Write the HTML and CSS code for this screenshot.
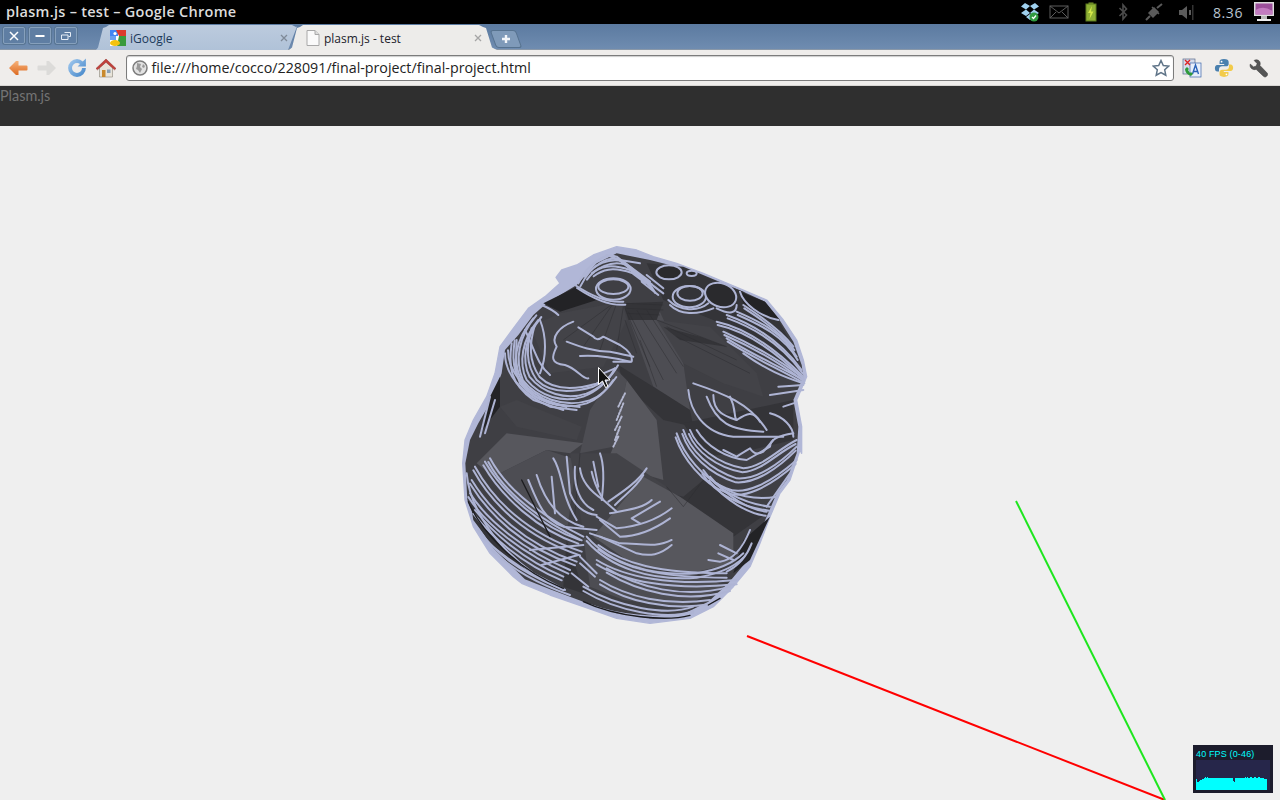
FILE: index.html
```html
<!DOCTYPE html>
<html lang="en">
<head>
<meta charset="utf-8">
<title>plasm.js - test - Google Chrome</title>
<link rel="stylesheet" href="styles.css">
</head>
<body>
<div class="screen">
  <header class="titlebar">
    <div class="wintitle">plasm.js – test – Google Chrome</div>
    <div class="tray">
      <svg class="ti" viewBox="0 0 20 20"><path fill="#9fd0ee" d="M5 1l5 3-4 3.500-5-3zM15 1l-5 3 4 3.500 5-3zM6 7.500l4 3.500-4 3-5-3zM14 7.500l-4 3.500 4 3 5-3zM6 15l4-3 4 3-4 3z"/><circle cx="14" cy="15" r="4.500" fill="#2f9a3f"/><path d="M12 15l1.500 1.500 2.500-3" fill="none" stroke="#fff" stroke-width="1.300"/></svg>
      <svg class="ti" viewBox="0 0 20 20"><rect x="1" y="4" width="18" height="12" fill="none" stroke="#5c5c5c"/><path d="M1 4l9 7 9-7M1 16l6-6M19 16l-6-6" fill="none" stroke="#5c5c5c"/></svg>
      <svg class="ti" viewBox="0 0 20 20"><rect x="7.500" y="0.500" width="5" height="2" fill="#7c9c2c"/><rect x="5" y="2" width="10" height="17" fill="#8eb034" stroke="#5d7a1e"/><path d="M11 4l-4 7h2.500L8.500 17l4-7.500H10z" fill="#d6e848"/></svg>
      <svg class="ti" viewBox="0 0 20 20"><path d="M6.500 6l7 7-3.500 4V3l3.500 4-7 7" fill="none" stroke="#4c4c4c" stroke-width="1.600"/></svg>
      <svg class="ti" viewBox="0 0 20 20"><path d="M2 18l4-4M18 2l-5 4" stroke="#5a5a5a" stroke-width="2"/><path d="M5 11l4 4 5-5-4-4zM8 5l7 7" fill="#5a5a5a" stroke="#5a5a5a" stroke-width="1.500"/></svg>
      <svg class="ti" viewBox="0 0 20 20"><path d="M2 8h3l5-4v13l-5-4H2z" fill="#5c5c5c"/><rect x="12" y="8" width="2" height="5" fill="#5c5c5c"/><rect x="15" y="3" width="1.500" height="15" fill="#333"/></svg>
      <div class="clock">8.36</div>
      <svg class="monitor" viewBox="0 0 22 22"><rect x="1" y="1" width="20" height="14" fill="#ddd"/><rect x="2.500" y="2.500" width="17" height="11" fill="#9b4f9a"/><path d="M2.500 9q8-5 17 1v3.500h-17z" fill="#c27cc0"/><rect x="8" y="15" width="6" height="3" fill="#bbb"/><rect x="4" y="18" width="14" height="2" fill="#eee"/></svg>
    </div>
  </header>

  <nav class="tabstrip">
    <div class="winbtns">
      <div class="winbtn"><svg viewBox="0 0 12 12"><path d="M2 2l8 8M10 2l-8 8" stroke="#fff" stroke-width="1.500"/></svg></div>
      <div class="winbtn"><svg viewBox="0 0 12 12"><rect x="1.500" y="5" width="9" height="2" fill="#fff"/></svg></div>
      <div class="winbtn"><svg viewBox="0 0 12 12"><path d="M4.500 2.500h6v4h-2M1.500 5h6.500v4.500H1.500z" fill="none" stroke="#e6edf5"/></svg></div>
    </div>
    <div class="tab tab-back">
      <svg class="favicon" viewBox="0 0 16 16"><rect width="16" height="16" fill="#fff"/><path d="M0 0h8v6H0z" fill="#4285f4"/><path d="M6 0h10v6H9z" fill="#db3a2d"/><path d="M9 6h7v10H7z" fill="#3a9a3c"/><path d="M0 6h6v4H0z" fill="#6aa0f0"/><ellipse cx="5" cy="13" rx="5" ry="3" fill="#f4c20d"/><circle cx="5" cy="3.500" r="1.600" fill="#fff"/></svg>
      <span class="tabtext">iGoogle</span>
      <svg class="tabclose" viewBox="0 0 8 8"><path d="M1 1l6 6M7 1L1 7" stroke="#7f8a98" stroke-width="1.300"/></svg>
    </div>
    <div class="tab tab-active">
      <svg class="docicon" viewBox="0 0 14 16"><path d="M1 .500h8l4 4v11H1z" fill="#fafafa" stroke="#a8a8a8"/><path d="M9 .500v4h4" fill="#ddd" stroke="#a8a8a8"/></svg>
      <span class="tabtext">plasm.js - test</span>
      <svg class="tabclose" viewBox="0 0 8 8"><path d="M1 1l6 6M7 1L1 7" stroke="#a5a5a5" stroke-width="1.300"/></svg>
    </div>
    <div class="newtab"><svg viewBox="0 0 10 10"><path d="M5 1v8M1 5h8" stroke="#f2f5f9" stroke-width="2.400"/></svg></div>
  </nav>

  <div class="toolbar">
    <div class="tool">
      <svg viewBox="0 0 20 16"><defs><linearGradient id="og" x1="0" y1="0" x2="0" y2="1"><stop offset="0" stop-color="#f6b27a"/><stop offset="1" stop-color="#dd6b22"/></linearGradient></defs><path d="M1 8l7-7h2.500v4.500h8q1 0 1 1v3q0 1-1 1h-8V15H8z" fill="url(#og)"/></svg>
    </div>
    <div class="tool">
      <svg viewBox="0 0 20 16"><path d="M19 8l-7-7H9.500v4.500h-8q-1 0-1 1v3q0 1 1 1h8V15H12z" fill="#dcdbd9"/></svg>
    </div>
    <div class="tool">
      <svg viewBox="0 0 18 18"><defs><linearGradient id="bg" x1="0" y1="0" x2="1" y2="1"><stop offset="0" stop-color="#a8cdf0"/><stop offset="1" stop-color="#3f83c8"/></linearGradient></defs><path d="M9 1a8 8 0 1 0 8 8h-3.500A4.500 4.500 0 1 1 9 4.500c1 0 2 .4 2.700 1L9.500 7.700H17V.5l-2.800 2.600A8 8 0 0 0 9 1z" fill="url(#bg)"/></svg>
    </div>
    <div class="tool">
      <svg viewBox="0 0 20 20"><path d="M3.500 9.500V19h13V9.500L10 3.500z" fill="#e8e4da" stroke="#8a8478" stroke-width=".6"/><rect x="6" y="12" width="3.500" height="7" fill="#c9892d"/><rect x="11" y="11.500" width="3.500" height="3.500" fill="#8aa0b5"/><path d="M0 10.500L10 1l10 9.500-1.500 1.300L10 4.300 1.500 11.800z" fill="#c2403a" stroke="#90302c" stroke-width=".5"/></svg>
    </div>
    <div class="omnibox">
      <svg class="globe" viewBox="0 0 16 16"><circle cx="8" cy="8" r="7" fill="#e2e2e2" stroke="#7d7d7d" stroke-width="1.500"/><path d="M5 3l4 1-1 3 2 2-2 4-2-3-2-1 1-3zM11 4l2 2-1 2-2-1z" fill="#9a9a9a"/></svg>
      <span class="url">file:///home/cocco/228091/final-project/final-project.html</span>
      <svg class="star" viewBox="0 0 18 18"><path d="M9 1.500l2.300 5 5.400.6-4 3.700 1.100 5.400L9 13.500l-4.800 2.700 1.100-5.400-4-3.700 5.400-.6z" fill="#fdfdfd" stroke="#5f7488" stroke-width="1.500"/></svg>
    </div>
    <div class="ext ext-a">
      <svg viewBox="0 0 20 20"><rect x="1" y="1" width="12" height="15" fill="#d5dceb" stroke="#5a6a8a" stroke-width=".7"/><rect x="8" y="5" width="11" height="14" fill="#e8effa" stroke="#3c66a8" stroke-width=".7"/><path d="M10.500 16l3-9 3 9M11.500 13.500h4" fill="none" stroke="#2a62b8" stroke-width="1.400"/><path d="M3 2l5 5M8 2L3 7" stroke="#d22" stroke-width="1.400"/><path d="M3 11q0 5 6 7l2-2-2-2-1 1-2-3 1-1-2-2z" fill="#2e9a3a"/></svg>
    </div>
    <div class="ext ext-b">
      <svg viewBox="0 0 18 18"><path d="M9 1c-3 0-4 1-4 2.500V5.500h4.200v.7H3C1.500 6.200.8 7.500.8 9.200s.8 3 2.200 3h1.500v-2c0-1.500 1.300-2.700 2.800-2.700h3.700c1.200 0 2.200-1 2.200-2.200V3.500C13.200 2 12 1 9 1z" fill="#4a80ae"/><path d="M9 17c3 0 4-1 4-2.500v-2H8.800v-.7H15c1.500 0 2.200-1.300 2.200-3s-.8-3-2.200-3h-1.500v2c0 1.500-1.300 2.700-2.800 2.700H7.200C6 10.500 5 11.500 5 12.700v1.800C4.800 16 6 17 9 17z" fill="#f2cb4a"/><circle cx="6.800" cy="3.300" r=".8" fill="#fff"/><circle cx="11.200" cy="14.700" r=".8" fill="#fff"/></svg>
    </div>
    <div class="ext ext-c">
      <svg viewBox="0 0 18 18"><path d="M2 5.500L5 8l2.500-.8L8.200 5 5.500 2.200C8 .8 11 2.200 11 5c0 .8-.1 1.300-.3 1.700l6.300 6.600c1 1 .9 2-.1 3s-2 1-3 .1L7.300 10.200C4.500 11.300 1.200 9 2 5.500z" fill="#555" stroke="#3a3a3a" stroke-width=".5"/></svg>
    </div>
  </div>

  <div class="appbar"><span class="appname">Plasm.js</span></div>

  <main class="stage">
    <svg class="scene" viewBox="0 126 1280 674">
      <line class="axis-x" x1="747" y1="636" x2="1165" y2="800"/>
      <line class="axis-y" x1="1016" y1="501" x2="1165" y2="800"/>
      <g transform="translate(450 240) scale(.33333)">
        <polygon class="rim" points="45,600 70,540 110,470 135,400 150,320 190,265 235,205 285,170 330,130 318,112 335,90 380,75 430,45 500,20 560,30 610,50 680,70 760,100 880,150 950,180 1000,240 1040,300 1060,360 1070,410 1040,480 1055,560 1055,640 1050,630 1020,720 990,760 960,830 930,910 900,980 850,1040 790,1100 720,1135 600,1150 500,1135 400,1100 300,1065 215,1030 190,1010 120,940 70,860 45,780 38,670"/>
        <polygon class="body" points="60,600 85,550 125,480 155,400 165,330 205,285 250,225 290,190 380,135 440,70 500,40 600,60 680,80 760,110 880,155 945,185 992,245 1030,305 1055,375 1060,410 1030,480 1045,560 1040,640 1010,720 980,760 950,830 920,900 885,970 835,1030 775,1085 700,1122 600,1135 500,1120 400,1085 300,1048 225,1018 130,925 80,850 52,780 46,670"/>
        <!-- facets -->
        <polygon class="f-dark" points="590,70 700,80 880,155 985,240 1040,340 1050,400 920,340 790,240 640,180"/>
        <polygon class="f-black" points="870,155 945,185 990,240 930,225 880,190"/>
        <polygon class="f-black" points="280,190 380,140 440,180 330,215"/>
        <polygon class="f-mid" points="490,190 520,200 530,240 460,380 300,400 240,260 330,220"/>
        <polygon class="f-light" points="525,205 625,205 700,370 720,510 610,440 560,300"/>
        <polygon class="f-dark" points="520,190 640,185 620,240 535,240"/>
        <polygon class="f-mid" points="620,240 780,260 920,400 940,470 820,430 700,370"/>
        <polygon class="f-dark" points="640,260 690,300 830,320 750,290"/>
        <polygon class="f-dark" points="505,375 610,440 720,510 730,560 640,540 520,430"/>
        <polygon class="f-light" points="500,390 530,420 490,620 390,640 420,510"/>
        <polygon class="f-pale" points="530,420 620,540 640,720 470,670 490,620"/>
        <polygon class="f-black" points="120,470 150,410 150,500 90,580"/>
        <polygon class="f-mid" points="150,500 200,480 395,560 380,600 200,560"/>
        <polygon class="f-dark" points="700,550 1030,480 1030,600 860,640 760,650"/>
        <polygon class="f-pale" points="80,670 170,580 400,610 360,640 290,630 130,710"/>
        <polygon class="f-light" points="130,710 290,630 380,660 350,880 240,820"/>
        <polygon class="f-mid" points="360,640 500,640 650,740 640,880 400,880"/>
        <polygon class="f-dark" points="620,750 700,770 760,720 950,820 850,890 780,870"/>
        <polygon class="f-pale" points="580,710 690,770 850,880 850,970 720,1000 560,980 430,890"/>
        <polygon class="f-black" points="960,830 900,960 850,1000 880,900"/>
        <polygon class="f-light" points="400,890 560,980 790,1020 820,1040 700,1100 520,1080 420,1040"/>
        <polygon class="f-dark" points="60,780 130,860 230,990 130,920 70,840"/>
        <polygon class="f-dark" points="350,900 390,1020 430,1070 340,1040"/>
        <g class="crease">
          <path d="M525,205L600,380M535,215L640,420M560,210L680,400M590,210L700,380M620,240L830,320M650,260L860,360M680,290L900,400M525,240L560,340M570,300L620,440"/>
          <path d="M490,190L340,300M490,190L400,320M500,190L450,330M520,200L500,330M530,190L640,195M530,205L640,210M530,220L630,225"/>
          <path d="M700,800L760,720M650,740L700,800M390,640L370,880"/>
        </g>
        <g class="stripes">
          <path d="M525,460L505,500M520,490L500,540M515,530L495,570M510,560L495,600M505,590L490,620"/>
        </g>
        <!-- upper contours -->
        <g class="contour">
          <g id="swirl">
            <path d="M250,235C195,300 185,370 210,430C250,480 330,515 410,490C440,480 470,450 490,420"/>
            <path d="M265,240C215,300 205,370 230,420C270,470 340,490 400,470C440,455 470,430 495,385"/>
            <path d="M245,265C230,320 225,370 260,420C300,460 360,460 430,440L470,420"/>
            <path d="M165,340C165,400 210,460 300,500L380,510"/>
            <path d="M185,310C175,380 180,430 250,480L340,510"/>
          </g>
          <use href="#swirl" transform="translate(9 -9)"/>
          <path d="M270,240C290,290 290,350 270,400"/>
          <path d="M225,270C255,330 260,370 300,405"/>
          <path d="M200,300C195,370 200,410 230,440"/>
          <path d="M275,195Q310,210 325,225"/>
          <path d="M370,245C330,260 300,290 320,320C305,350 300,370 345,375C380,385 400,420 415,415"/>
          <path d="M385,262L430,290Q440,305 460,290L510,315Q550,340 545,365L490,365"/>
          <path d="M350,305C390,320 430,335 480,335Q530,345 550,350"/>
          <path d="M390,348C430,345 480,350 540,365"/>
          <path d="M495,385L460,400"/>
          <path d="M120,470L90,590M135,480L105,580"/>
          <ellipse cx="490" cy="147" rx="52" ry="32"/>
          <ellipse cx="490" cy="140" rx="45" ry="22"/>
          <g id="topfold">
            <path d="M385,130C420,60 470,40 500,50C540,80 600,130 610,150"/>
            <path d="M405,110C430,75 480,50 520,65L600,125"/>
            <path d="M425,100C450,80 480,70 540,90L580,120"/>
            <path d="M375,135C420,165 470,190 520,185"/>
          </g>
          <use href="#topfold" transform="translate(6 9)"/>
          <path d="M470,45L510,60L570,70"/>
          <path d="M580,115L640,160M590,105L640,145M575,125L625,165"/>
          <ellipse class="hole" cx="657" cy="97" rx="38" ry="21"/>
          <ellipse class="hole" cx="725" cy="100" rx="15" ry="8"/>
          <ellipse cx="718" cy="170" rx="50" ry="32"/>
          <ellipse cx="720" cy="160" rx="38" ry="22"/>
          <path d="M660,195C690,225 740,225 790,205"/>
          <path d="M655,180C690,215 745,215 775,190"/>
          <ellipse class="hole" cx="812" cy="165" rx="48" ry="35" transform="rotate(20 812 165)"/>
          <path d="M800,205C840,225 860,220 860,195"/>
          <path d="M870,155C880,190 930,230 985,240"/>
          <g id="rstripes">
            <path d="M800,245C870,260 960,310 1060,410"/>
            <path d="M830,225C900,250 990,300 1055,390"/>
            <path d="M860,215C930,245 1000,280 1040,350"/>
            <path d="M880,195C950,240 1000,280 1030,320"/>
            <path d="M820,275C900,310 990,360 1060,415"/>
            <path d="M830,295C900,340 990,380 1060,420"/>
          </g>
          <use href="#rstripes" transform="translate(3 10)"/>
          <path d="M880,340C950,390 1000,410 1060,430"/>
          <path d="M960,465L1060,450M985,440L1060,435"/>
          <path d="M715,450C720,510 760,580 850,590L1000,590"/>
          <path d="M730,430C820,460 900,490 950,570"/>
          <path d="M770,470C800,550 840,570 940,575"/>
          <path d="M790,465C790,520 830,530 860,540"/>
          <path d="M840,470C860,510 850,530 860,540C890,520 910,510 930,545"/>
          <path d="M960,520C1000,530 1030,560 1030,590"/>
          <path d="M1000,500L1030,490"/>
        </g>
        <!-- lower contours -->
        <g class="contour" transform="translate(0 570)">
          <g id="lrswirl">
            <path d="M680,10C700,70 760,150 830,175C880,200 960,160 1040,90"/>
            <path d="M700,0C720,60 780,120 860,145C920,150 990,100 1040,50"/>
            <path d="M720,0C740,50 800,100 880,115C940,110 980,60 1040,30"/>
            <path d="M760,120C800,180 880,220 960,230"/>
            <path d="M780,140C830,200 900,240 950,245"/>
          </g>
          <use href="#lrswirl" transform="translate(-3 12)"/>
          <path d="M740,0C770,50 830,85 890,90L960,50Q960,20 1030,10"/>
          <path d="M820,60L860,80Q890,60 900,55Q915,80 940,65L970,30"/>
          <path d="M800,160C850,200 920,210 980,200"/>
          <path d="M950,230L1020,130"/>
          <g id="llbundle">
            <path d="M105,95C160,190 270,290 390,330"/>
            <path d="M120,85C170,180 280,260 400,320"/>
            <path d="M75,110C130,210 230,310 395,365"/>
            <path d="M65,150C120,240 220,340 380,395"/>
            <path d="M60,190C110,270 220,360 360,420"/>
            <path d="M75,240C130,310 220,390 340,440"/>
          </g>
          <use href="#llbundle" transform="translate(-5 11)"/>
          <path d="M50,130C60,240 140,350 250,430L345,480"/>
          <path d="M85,300C140,370 200,420 320,470"/>
          <path d="M100,325C170,390 250,440 340,480"/>
          <path d="M125,360C190,420 260,460 360,495"/>
          <path d="M235,150C260,210 280,270 340,290L440,300"/>
          <path d="M260,135C280,200 320,270 400,290"/>
          <path d="M305,140L315,250"/>
          <path d="M310,85C340,130 330,190 380,270"/>
          <path d="M350,80L360,190Q385,250 440,255"/>
          <path d="M375,110C370,170 390,220 430,240"/>
          <path d="M390,115C395,160 430,190 460,210L500,245"/>
          <path d="M425,125C435,170 450,190 460,210"/>
          <path d="M450,70C465,110 460,170 455,210"/>
          <path d="M430,95L445,170"/>
          <path d="M590,115C560,160 510,190 475,215"/>
          <path d="M580,135C560,170 530,190 495,225"/>
          <path d="M605,210C580,235 530,240 480,250"/>
          <path d="M630,215L545,265L570,280"/>
          <path d="M665,235C620,270 560,290 500,295L440,260"/>
          <path d="M660,265C610,300 560,320 510,320L450,270"/>
          <path d="M665,330C620,355 570,340 510,340L420,310"/>
          <path d="M665,345C630,375 600,380 560,370L450,320"/>
          <g id="bands">
            <path d="M410,320C480,400 600,440 740,430C800,420 850,400 880,370"/>
            <path d="M445,345C520,400 620,430 830,430"/>
            <path d="M440,390C520,440 660,470 860,450"/>
            <path d="M470,415C560,470 700,510 840,470"/>
            <path d="M450,450C530,500 650,530 780,510"/>
            <path d="M400,470C500,530 650,560 730,530"/>
          </g>
          <use href="#bands" transform="translate(0 13)"/>
          <path d="M420,525C500,555 620,572 730,548"/>
          <path d="M390,380L440,430M365,430L415,470M390,400L435,440"/>
          <path d="M900,300C880,350 850,390 810,395L775,390M810,345L860,370M805,370L850,390"/>
          <path d="M905,340C890,380 860,410 830,425"/>
          <path d="M275,405L385,375M240,360L400,345"/>
        </g>
        <g class="contour-dark" transform="translate(0 570)">
          <path d="M55,215C90,300 200,420 340,475M400,515C500,562 650,575 720,556"/>
          <path d="M775,525L810,505M215,150L300,320"/>
        </g>
      </g>
      <path class="cursor" d="M598.500 367.500v17l4-3.500 3 6.500 2.500-1-3-6.500h5z"/>
    </svg>
    <div class="stats">
      <div class="fpstext">40 FPS (0-46)</div>
      <svg class="graph" viewBox="0 0 74 30" preserveAspectRatio="none"><path class="graph-fill" d="M0 19h1v3h2v-1h1v-1h2v-1h2v-1h1v-1h1v1h1v-1h1v1h25v3h1v1h1v-4h10v-1h1v1h1v-1h1v1h2v-1h2v1h2v-1h2v1h2v-1h2v1h4v1h3v12H0z"/></svg>
    </div>
  </main>
</div>
</body>
</html>
```

FILE: styles.css
```css
* { box-sizing: border-box; }
html, body { margin: 0; padding: 0; }
body { background: #efefef; overflow: hidden; }
svg { display: block; }

.screen { width: 1280px; height: 800px; display: flex; flex-direction: column; overflow: hidden; }

/* window title bar */
.titlebar { height: 24px; flex: none; background: #000; display: flex; align-items: center; justify-content: space-between; }
.wintitle { padding: 0 0 2px 6px; color: #dcdcdc; font: 600 14.5px "Open Sans", sans-serif; letter-spacing: .27px; white-space: nowrap; }
.tray { display: grid; grid-template-columns: 28px 30px 34px 30px 32px 34px 48px 24px; align-items: center; justify-items: center; margin-right: 4px; }
.ti { width: 20px; height: 20px; }
.clock { color: #b9c4d0; font: 14px "Open Sans", sans-serif; letter-spacing: .6px; }
.monitor { width: 22px; height: 22px; }

/* tab strip */
.tabstrip { height: 26px; flex: none; display: flex; align-items: flex-end; background: linear-gradient(#5b7aa0, #6f8cb0); border-bottom: 1px solid #8a98a8; }
.winbtns { display: flex; gap: 4px; align-self: flex-start; padding: 3px 0 0 3px; width: 96px; }
.winbtn { width: 22px; height: 17px; border: 1px solid #86a0bc; border-radius: 2px; background: #5f7ea3; box-shadow: 0 0 0 1px #587593; display: flex; align-items: center; justify-content: center; }
.winbtn svg { width: 12px; height: 12px; }
.tab { height: 25px; margin-bottom: -1px; padding-top: 1px; display: flex; align-items: center; font: 12px "Open Sans", sans-serif; }
.tab-back { width: 201px; padding-right: 9px; padding-left: 14px; background: linear-gradient(#bccbde, #b0c2d8); color: #1c3a5a; clip-path: polygon(0 100%, 2px 90%, 7px 12%, 10px 2px, 13px 0, 196px 0, 200px 2px, 201px 6%, 192px 100%); }
.tab-active { width: 208px; margin-left: -8px; padding-right: 15px; padding-left: 17px; background: #edecea; color: #22222c; clip-path: polygon(0 100%, 3px 90%, 8px 12%, 11px 2px, 14px 0, 190px 0, 194px 2px, 197px 12%, 203px 90%, 208px 100%); }
.favicon { width: 16px; height: 16px; margin-right: 4px; }
.docicon { width: 14px; height: 16px; margin-right: 4px; }
.tabtext { white-space: nowrap; }
.tabclose { width: 8px; height: 8px; margin-left: auto; }
.newtab { width: 26px; height: 18px; margin-left: -4px; margin-bottom: 1px; background: #7f9ab9; border: 1px solid #56728f; border-radius: 3px; transform: skewX(20deg); display: flex; align-items: center; justify-content: center; }
.newtab svg { width: 10px; height: 10px; transform: skewX(-20deg); }

/* toolbar */
.toolbar { height: 36px; flex: none; display: flex; align-items: center; padding-left: 3px; background: #efedeb; border-bottom: 1px solid #d8d6d3; }
.tool { width: 29.5px; display: flex; justify-content: center; }
.tool svg { width: 20px; height: 20px; }
.omnibox { width: 1048px; height: 26px; margin-left: 4.500px; display: flex; align-items: center; padding: 0 3px 0 5px; background: #fff; border: 1px solid #7c7c7c; border-radius: 3px; box-shadow: inset 0 1px 1px #ccc; }
.globe { width: 16px; height: 16px; margin-right: 4px; }
.url { font: 14.25px "Open Sans", sans-serif; color: #222; white-space: nowrap; }
.star { width: 18px; height: 18px; margin-left: auto; }
.ext { display: flex; justify-content: center; }
.ext svg { width: 20px; height: 20px; }
.ext-a { width: 36px; }
.ext-b { width: 28px; }
.ext-c { width: 40px; }

/* page */
.appbar { height: 40px; flex: none; background: #2f2f2f; }
.appname { color: #737373; font: 400 14.4px "Lato", sans-serif; line-height: 19px; display: block; }
.stage { flex: 1; position: relative; background: #efefef; }
.scene { position: absolute; inset: 0; width: 1280px; height: 674px; }
.axis-x { stroke: #f00; stroke-width: 2; }
.axis-y { stroke: #1ee61e; stroke-width: 2; }
.rim { fill: #b1b7d7; stroke: #b1b7d7; stroke-width: 4; stroke-linejoin: round; }
.body { fill: #3f3f44; }
.f-black { fill: #232326; }
.f-dark { fill: #343438; }
.f-mid { fill: #434348; }
.f-light { fill: #4d4d53; }
.f-pale { fill: #57575d; }
.crease { fill: none; stroke: #2c2c30; stroke-width: 1.500; }
.contour, .contour-dark, .stripes { fill: none; stroke-linecap: round; stroke-linejoin: round; }
.contour { stroke: #aeb4d4; stroke-width: 6; }
.contour .hole { fill: #2a2a2d; }
.contour-dark { stroke: #1c1c1f; stroke-width: 4; }
.stripes { stroke: #b4b8d0; stroke-width: 6; stroke-dasharray: 5 5; }
.cursor { fill: #111; stroke: #fff; stroke-width: 1; }

/* fps meter */
.stats { position: absolute; right: 7px; bottom: 7px; width: 80px; height: 48px; padding: 3px; background: #1c1c2c; display: flex; flex-direction: column; }
.fpstext { color: #0ff; font: 9px/12px "Liberation Sans", sans-serif; letter-spacing: .15px; }
.graph { width: 74px; height: 30px; background: #26264a; }
.graph-fill { fill: #0ff; }
```
